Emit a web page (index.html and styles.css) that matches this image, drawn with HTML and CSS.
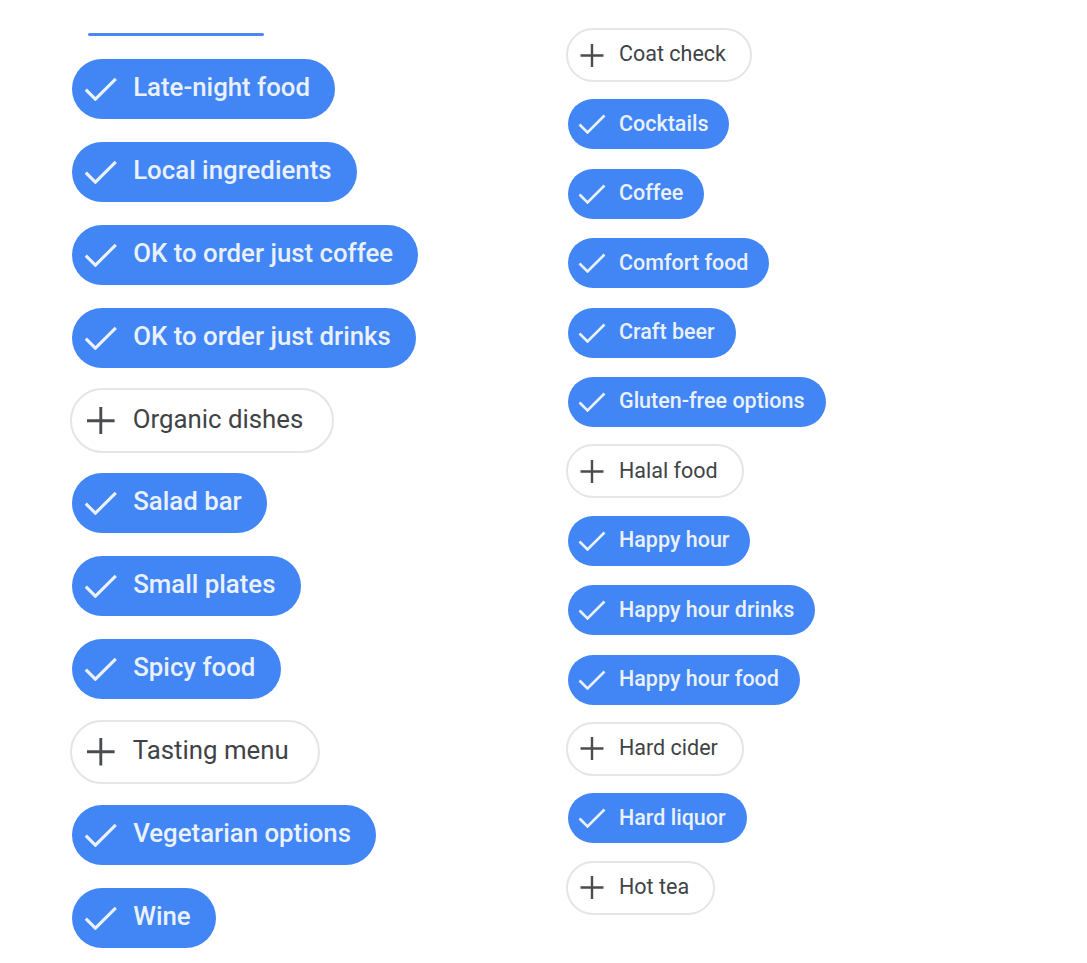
FILE: index.html
```html
<!DOCTYPE html>
<html lang="en">
<head>
<meta charset="utf-8">
<title>Amenities</title>
<link rel="stylesheet" href="styles.css">
</head>
<body>
<main class="page">
  <section class="col col-left">
    <div class="cut-chip"></div>
    <span class="chip on"><svg class="ico" viewBox="0 0 28 20"><polyline points="1.5,10.5 9.5,18.5 26.5,1.5"/></svg><span class="lbl">Late-night food</span></span>
    <span class="chip on"><svg class="ico" viewBox="0 0 28 20"><polyline points="1.5,10.5 9.5,18.5 26.5,1.5"/></svg><span class="lbl">Local ingredients</span></span>
    <span class="chip on"><svg class="ico" viewBox="0 0 28 20"><polyline points="1.5,10.5 9.5,18.5 26.5,1.5"/></svg><span class="lbl">OK to order just coffee</span></span>
    <span class="chip on"><svg class="ico" viewBox="0 0 28 20"><polyline points="1.5,10.5 9.5,18.5 26.5,1.5"/></svg><span class="lbl">OK to order just drinks</span></span>
    <span class="chip off"><svg class="ico plus" viewBox="0 0 28 23"><path d="M14 0V23M2.5 11.5H25.5"/></svg><span class="lbl">Organic dishes</span></span>
    <span class="chip on"><svg class="ico" viewBox="0 0 28 20"><polyline points="1.5,10.5 9.5,18.5 26.5,1.5"/></svg><span class="lbl">Salad bar</span></span>
    <span class="chip on"><svg class="ico" viewBox="0 0 28 20"><polyline points="1.5,10.5 9.5,18.5 26.5,1.5"/></svg><span class="lbl">Small plates</span></span>
    <span class="chip on"><svg class="ico" viewBox="0 0 28 20"><polyline points="1.5,10.5 9.5,18.5 26.5,1.5"/></svg><span class="lbl">Spicy food</span></span>
    <span class="chip off"><svg class="ico plus" viewBox="0 0 28 23"><path d="M14 0V23M2.5 11.5H25.5"/></svg><span class="lbl">Tasting menu</span></span>
    <span class="chip on"><svg class="ico" viewBox="0 0 28 20"><polyline points="1.5,10.5 9.5,18.5 26.5,1.5"/></svg><span class="lbl">Vegetarian options</span></span>
    <span class="chip on"><svg class="ico" viewBox="0 0 28 20"><polyline points="1.5,10.5 9.5,18.5 26.5,1.5"/></svg><span class="lbl">Wine</span></span>
  </section>
  <section class="col col-right">
    <span class="chip off"><svg class="ico plus" viewBox="0 0 28 23"><path d="M14 0V23M2.5 11.5H25.5"/></svg><span class="lbl">Coat check</span></span>
    <span class="chip on"><svg class="ico" viewBox="0 0 28 20"><polyline points="1.5,10.5 9.5,18.5 26.5,1.5"/></svg><span class="lbl">Cocktails</span></span>
    <span class="chip on"><svg class="ico" viewBox="0 0 28 20"><polyline points="1.5,10.5 9.5,18.5 26.5,1.5"/></svg><span class="lbl">Coffee</span></span>
    <span class="chip on"><svg class="ico" viewBox="0 0 28 20"><polyline points="1.5,10.5 9.5,18.5 26.5,1.5"/></svg><span class="lbl">Comfort food</span></span>
    <span class="chip on"><svg class="ico" viewBox="0 0 28 20"><polyline points="1.5,10.5 9.5,18.5 26.5,1.5"/></svg><span class="lbl">Craft beer</span></span>
    <span class="chip on"><svg class="ico" viewBox="0 0 28 20"><polyline points="1.5,10.5 9.5,18.5 26.5,1.5"/></svg><span class="lbl">Gluten-free options</span></span>
    <span class="chip off"><svg class="ico plus" viewBox="0 0 28 23"><path d="M14 0V23M2.5 11.5H25.5"/></svg><span class="lbl">Halal food</span></span>
    <span class="chip on"><svg class="ico" viewBox="0 0 28 20"><polyline points="1.5,10.5 9.5,18.5 26.5,1.5"/></svg><span class="lbl">Happy hour</span></span>
    <span class="chip on"><svg class="ico" viewBox="0 0 28 20"><polyline points="1.5,10.5 9.5,18.5 26.5,1.5"/></svg><span class="lbl">Happy hour drinks</span></span>
    <span class="chip on"><svg class="ico" viewBox="0 0 28 20"><polyline points="1.5,10.5 9.5,18.5 26.5,1.5"/></svg><span class="lbl">Happy hour food</span></span>
    <span class="chip off"><svg class="ico plus" viewBox="0 0 28 23"><path d="M14 0V23M2.5 11.5H25.5"/></svg><span class="lbl">Hard cider</span></span>
    <span class="chip on"><svg class="ico" viewBox="0 0 28 20"><polyline points="1.5,10.5 9.5,18.5 26.5,1.5"/></svg><span class="lbl">Hard liquor</span></span>
    <span class="chip off"><svg class="ico plus" viewBox="0 0 28 23"><path d="M14 0V23M2.5 11.5H25.5"/></svg><span class="lbl">Hot tea</span></span>
  </section>
</main>
</body>
</html>
```
FILE: styles.css
```css
html, body {
  margin: 0;
  padding: 0;
  background: #ffffff;
}

body {
  font-family: Roboto, "Liberation Sans", Arial, sans-serif;
  width: 1087px;
  height: 963px;
  overflow: hidden;
}

.page {
  display: grid;
  grid-template-columns: 496px 1fr;
  padding-left: 72px;
}

.col {
  display: flex;
  flex-direction: column;
  align-items: flex-start;
  gap: 0.97em;
}

.col-left {
  font-size: 24px;
  gap: 22.9px;
}

.col-right {
  font-size: 20px;
  padding-top: 30px;
}

.cut-chip {
  width: 176px;
  height: 3px;
  margin-top: 33px;
  margin-left: 16px;
  border-radius: 2px;
  background: #4a89f3;
}

.chip {
  display: inline-flex;
  align-items: center;
  box-sizing: border-box;
  height: 2.5em;
  padding: 0 1.05em 0 0.5em;
  border-radius: 1.25em;
  white-space: nowrap;
}

.chip.on {
  background: #4285f4;
  color: #eaf1fe;
  font-weight: 500;
}

.chip.off {
  background: #ffffff;
  color: #404346;
  font-weight: 400;
  border: 0.1em solid #e3e5e8;
  height: 2.7em;
  border-radius: 1.35em;
  margin: -0.1em;
  padding-left: 0.5em;
  padding-right: 1.2em;
}

.ico {
  flex: none;
  width: 1.4em;
  height: 1em;
  margin-right: 0.65em;
  fill: none;
  stroke: currentColor;
  stroke-width: 2.6;
  stroke-linecap: butt;
  stroke-linejoin: miter;
}

.ico.plus {
  height: 1.15em;
  stroke: #4a4d50;
  stroke-width: 2.4;
}

.lbl {
  font-size: 1.075em;
  line-height: 1;
  position: relative;
  top: -0.04em;
}
```
